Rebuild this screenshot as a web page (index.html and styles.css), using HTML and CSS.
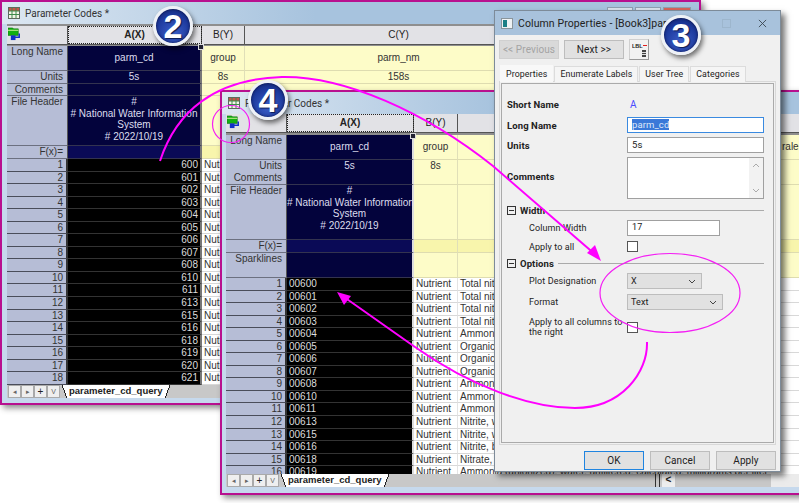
FILE: index.html
```html
<!DOCTYPE html>
<html>
  <head>
    <meta charset="UTF-8" />
    <link rel="stylesheet" href="styles.css">
  </head>
  <body>
    <svg class="defs" width="0" height="0">
      <symbol id="book-icon" viewBox="0 0 12 12">
        <rect x="0.5" y="0.5" width="11" height="11" fill="#f4f4e8" stroke="#5d6a5d" />
        <rect x="1" y="1" width="10" height="3" fill="#c8504a" />
        <path d="M4 1v10M8 1v10M1 4h10M1 7.5h10" stroke="#3f8a4a" fill="none" />
      </symbol>
      <symbol id="link-icon" viewBox="0 0 16 15">
        <path d="M0 1h5l1 1h5v7H0z" fill="#12b012" stroke="#0c6a0c" stroke-width="0.6" />
        <rect x="0" y="3" width="11" height="1" fill="#d8f4a0" />
        <path d="M12 7v4H7" fill="none" stroke="#1030c8" stroke-width="1.6" />
        <rect x="3" y="9" width="5" height="5" fill="#1030c8" />
      </symbol>
    </svg>

    <!-- back workbook -->
    <div class="window win-back">
      <div class="titlebar">
        <svg class="book-icon"><use href="#book-icon" /></svg>
        <span class="win-title">Parameter Codes *</span>
        <div class="win-btns">
          <span></span><span></span><span class="close"></span>
        </div>
      </div>
      <div class="sheet">
        <div class="row row-head">
          <div class="corner"><svg class="link-icon"><use href="#link-icon" /></svg></div>
          <div class="col-a col-sel">A(X)</div>
          <div class="col-b">B(Y)</div>
          <div class="col-c">C(Y)</div>
        </div>
        <div class="row row-long">
          <div class="label">Long Name</div>
          <div class="cell-a center">parm_cd<i class="handle"></i></div>
          <div class="cell-b center">group</div>
          <div class="cell-c center">parm_nm</div>
        </div>
        <div class="row row-units">
          <div class="label">Units</div>
          <div class="cell-a center">5s</div>
          <div class="cell-b center">8s</div>
          <div class="cell-c center">158s</div>
        </div>
        <div class="row row-comments">
          <div class="label">Comments</div>
          <div class="cell-a"></div>
          <div class="cell-b"></div>
          <div class="cell-c"></div>
        </div>
        <div class="row row-file">
          <div class="label">File Header</div>
          <div class="cell-a center">#<br># National Water Information<br>System<br># 2022/10/19</div>
          <div class="cell-b"></div>
          <div class="cell-c"></div>
        </div>
        <div class="row row-fx">
          <div class="label right">F(x)=</div>
          <div class="cell-a"></div>
          <div class="cell-b"></div>
          <div class="cell-c"></div>
        </div>
        <div class="rows">
          <div class="row data"><div class="num">1</div><div class="val right">600</div><div class="txt">Nutrient</div><div class="txt"></div></div>
          <div class="row data"><div class="num">2</div><div class="val right">601</div><div class="txt">Nutrient</div><div class="txt"></div></div>
          <div class="row data"><div class="num">3</div><div class="val right">602</div><div class="txt">Nutrient</div><div class="txt"></div></div>
          <div class="row data"><div class="num">4</div><div class="val right">603</div><div class="txt">Nutrient</div><div class="txt"></div></div>
          <div class="row data"><div class="num">5</div><div class="val right">604</div><div class="txt">Nutrient</div><div class="txt"></div></div>
          <div class="row data"><div class="num">6</div><div class="val right">605</div><div class="txt">Nutrient</div><div class="txt"></div></div>
          <div class="row data"><div class="num">7</div><div class="val right">606</div><div class="txt">Nutrient</div><div class="txt"></div></div>
          <div class="row data"><div class="num">8</div><div class="val right">607</div><div class="txt">Nutrient</div><div class="txt"></div></div>
          <div class="row data"><div class="num">9</div><div class="val right">608</div><div class="txt">Nutrient</div><div class="txt"></div></div>
          <div class="row data"><div class="num">10</div><div class="val right">610</div><div class="txt">Nutrient</div><div class="txt"></div></div>
          <div class="row data"><div class="num">11</div><div class="val right">611</div><div class="txt">Nutrient</div><div class="txt"></div></div>
          <div class="row data"><div class="num">12</div><div class="val right">613</div><div class="txt">Nutrient</div><div class="txt"></div></div>
          <div class="row data"><div class="num">13</div><div class="val right">615</div><div class="txt">Nutrient</div><div class="txt"></div></div>
          <div class="row data"><div class="num">14</div><div class="val right">616</div><div class="txt">Nutrient</div><div class="txt"></div></div>
          <div class="row data"><div class="num">15</div><div class="val right">618</div><div class="txt">Nutrient</div><div class="txt"></div></div>
          <div class="row data"><div class="num">16</div><div class="val right">619</div><div class="txt">Nutrient</div><div class="txt"></div></div>
          <div class="row data"><div class="num">17</div><div class="val right">620</div><div class="txt">Nutrient</div><div class="txt"></div></div>
          <div class="row data"><div class="num">18</div><div class="val right">621</div><div class="txt">Nutrient</div><div class="txt"></div></div>
        </div>
      </div>
      <div class="sheet-tabs">
        <div class="nav-btns">
          <span>&#9666;</span><span>&#9656;</span><span class="plus">+</span><span>V</span>
        </div>
        <div class="sheet-tab">parameter_cd_query</div>
      </div>
    </div>

    <!-- front workbook -->
    <div class="window win-front">
      <div class="titlebar">
        <svg class="book-icon"><use href="#book-icon" /></svg>
        <span class="win-title">Parameter Codes *</span>
      </div>
      <div class="sheet">
        <div class="row row-head">
          <div class="corner"><svg class="link-icon"><use href="#link-icon" /></svg></div>
          <div class="col-a col-sel">A(X)</div>
          <div class="col-b">B(Y)</div>
          <div class="col-c"></div>
        </div>
        <div class="row row-long">
          <div class="label">Long Name</div>
          <div class="cell-a center">parm_cd<i class="handle"></i></div>
          <div class="cell-b center">group</div>
          <div class="cell-c cell-cut">raler</div>
        </div>
        <div class="row row-units">
          <div class="label">Units</div>
          <div class="cell-a center">5s</div>
          <div class="cell-b center">8s</div>
          <div class="cell-c"></div>
        </div>
        <div class="row row-comments">
          <div class="label">Comments</div>
          <div class="cell-a"></div>
          <div class="cell-b"></div>
          <div class="cell-c"></div>
        </div>
        <div class="row row-file">
          <div class="label">File Header</div>
          <div class="cell-a center">#<br># National Water Information<br>System<br># 2022/10/19</div>
          <div class="cell-b"></div>
          <div class="cell-c"></div>
        </div>
        <div class="row row-fx">
          <div class="label right">F(x)=</div>
          <div class="cell-a"></div>
          <div class="cell-b"></div>
          <div class="cell-c"></div>
        </div>
        <div class="row row-spark">
          <div class="label">Sparklines</div>
          <div class="cell-a"></div>
          <div class="cell-b"></div>
          <div class="cell-c"></div>
        </div>
        <div class="rows">
          <div class="row data"><div class="num">1</div><div class="val">00600</div><div class="txt">Nutrient</div><div class="txt">Total nitrogen</div></div>
          <div class="row data"><div class="num">2</div><div class="val">00601</div><div class="txt">Nutrient</div><div class="txt">Total nitrogen</div></div>
          <div class="row data"><div class="num">3</div><div class="val">00602</div><div class="txt">Nutrient</div><div class="txt">Total nitrogen</div></div>
          <div class="row data"><div class="num">4</div><div class="val">00603</div><div class="txt">Nutrient</div><div class="txt">Total nitrogen</div></div>
          <div class="row data"><div class="num">5</div><div class="val">00604</div><div class="txt">Nutrient</div><div class="txt">Ammonia</div></div>
          <div class="row data"><div class="num">6</div><div class="val">00605</div><div class="txt">Nutrient</div><div class="txt">Organic nitrogen</div></div>
          <div class="row data"><div class="num">7</div><div class="val">00606</div><div class="txt">Nutrient</div><div class="txt">Organic nitrogen</div></div>
          <div class="row data"><div class="num">8</div><div class="val">00607</div><div class="txt">Nutrient</div><div class="txt">Organic nitrogen</div></div>
          <div class="row data"><div class="num">9</div><div class="val">00608</div><div class="txt">Nutrient</div><div class="txt">Ammonia</div></div>
          <div class="row data"><div class="num">10</div><div class="val">00610</div><div class="txt">Nutrient</div><div class="txt">Ammonia</div></div>
          <div class="row data"><div class="num">11</div><div class="val">00611</div><div class="txt">Nutrient</div><div class="txt">Ammonia</div></div>
          <div class="row data"><div class="num">12</div><div class="val">00613</div><div class="txt">Nutrient</div><div class="txt">Nitrite, water</div></div>
          <div class="row data"><div class="num">13</div><div class="val">00615</div><div class="txt">Nutrient</div><div class="txt">Nitrite, water</div></div>
          <div class="row data"><div class="num">14</div><div class="val">00616</div><div class="txt">Nutrient</div><div class="txt">Nitrite, bed</div></div>
          <div class="row data"><div class="num">15</div><div class="val">00618</div><div class="txt">Nutrient</div><div class="txt">Nitrate, water</div></div>
          <div class="row data"><div class="num">16</div><div class="val">00619</div><div class="txt">Nutrient</div><div class="txt">Ammonia (unionized), water, unfiltered, calculated, milligrams per liter</div></div>
        </div>
      </div>
      <div class="sheet-tabs">
        <div class="nav-btns">
          <span>&#9666;</span><span>&#9656;</span><span class="plus">+</span><span>V</span>
        </div>
        <div class="sheet-tab">parameter_cd_query</div>
        <div class="hscroll"><span>&lt;</span></div>
      </div>
    </div>

    <!-- column properties dialog -->
    <div class="dialog">
      <div class="dlg-title">
        <svg class="dlg-icon" viewBox="0 0 12 11">
          <rect x="0.5" y="0.5" width="11" height="10" fill="#eef2f4" stroke="#8a959c" />
          <rect x="2" y="2" width="4" height="7" fill="#1b7f86" />
        </svg>
        <span>Column Properties - [Book3]param</span>
        <i class="dlg-max"></i>
        <svg class="dlg-close" viewBox="0 0 10 10"><path d="M1 1l8 8M9 1l-8 8" stroke="#3a4650" fill="none" /></svg>
      </div>
      <div class="dlg-tools">
        <button class="btn disabled">&lt;&lt; Previous</button>
        <button class="btn">Next &gt;&gt;</button>
        <button class="btn-icon">
          <svg viewBox="0 0 16 16" width="16" height="16">
            <text x="0" y="6" class="lbl-text">LBL</text>
            <path d="M11 3.5h4" stroke="#e02020" fill="none" />
            <rect x="10" y="8" width="4" height="7" fill="#444" />
            <path d="M10 10.5h4M10 12.5h4" stroke="#ddd" fill="none" />
          </svg>
        </button>
      </div>
      <div class="dlg-tabs">
        <div class="dlg-tab active">Properties</div>
        <div class="dlg-tab">Enumerate Labels</div>
        <div class="dlg-tab">User Tree</div>
        <div class="dlg-tab">Categories</div>
      </div>
      <div class="panel">
        <div class="form-row top-row">
          <b>Short Name</b>
          <span class="short-name">A</span>
        </div>
        <div class="form-row">
          <b>Long Name</b>
          <div class="field focus"><mark>parm_cd</mark></div>
        </div>
        <div class="form-row">
          <b>Units</b>
          <div class="field">5s</div>
        </div>
        <div class="form-row comments-row">
          <b>Comments</b>
          <div class="field area">
            <div class="area-scroll">
              <svg viewBox="0 0 8 5"><path d="M1 4l3-3 3 3" stroke="#aaa" fill="none" /></svg>
              <svg viewBox="0 0 8 5"><path d="M1 1l3 3 3-3" stroke="#aaa" fill="none" /></svg>
            </div>
          </div>
        </div>
        <div class="group"><i class="minus"></i><b>Width</b><hr></div>
        <div class="form-row sub">
          <span>Column Width</span>
          <div class="field w-short">17</div>
        </div>
        <div class="form-row sub check-row">
          <span>Apply to all</span>
          <i class="check"></i>
        </div>
        <div class="group"><i class="minus"></i><b>Options</b><hr></div>
        <div class="form-row sub">
          <span>Plot Designation</span>
          <div class="select s-plot">X<svg viewBox="0 0 8 5"><path d="M1 1l3 3 3-3" stroke="#444" fill="none" /></svg></div>
        </div>
        <div class="form-row sub">
          <span>Format</span>
          <div class="select s-format">Text<svg viewBox="0 0 8 5"><path d="M1 1l3 3 3-3" stroke="#444" fill="none" /></svg></div>
        </div>
        <div class="form-row sub check-row">
          <span class="wrap">Apply to all columns to<br>the right</span>
          <i class="check"></i>
        </div>
      </div>
      <div class="dlg-foot">
        <button class="btn foot-btn default">OK</button>
        <button class="btn foot-btn">Cancel</button>
        <button class="btn foot-btn">Apply</button>
      </div>
    </div>

    <!-- pen annotations -->
    <svg class="pen" viewBox="0 0 799 503">
      <circle class="thin" cx="231" cy="124" r="18.5" />
      <ellipse class="thin" cx="670" cy="293" rx="70" ry="39.5" />
      <path class="thick" d="M160 161C176 112 214 79 282 77C345 76 425 112 493 166L597 256" />
      <path class="head" d="M601 261L587 253L595 245Z" />
      <path class="thick" d="M647 342C648 372 622 408 575 408C530 408 470 386 415 347L344 297" />
      <path class="head" d="M337 292L351 296L344 305Z" />
    </svg>

    <div class="badge badge-2">2</div>
    <div class="badge badge-3">3</div>
    <div class="badge badge-4">4</div>
  </body>
</html>
```

FILE: styles.css
```css
body {
  margin: 0;
  width: 799px;
  height: 503px;
  position: relative;
  overflow: hidden;
  background: white;
  font-family: "Liberation Sans", Arial, sans-serif;
  font-size: 10px;
  color: #222;
}
.defs {
  position: absolute;
}

/* workbook windows */
.window {
  position: absolute;
  box-sizing: border-box;
  border: 2px solid #b8108f;
  background: #c6d9ed;
  display: flex;
  flex-direction: column;
  box-shadow: 3px 3px 6px rgba(0, 0, 0, 0.45);
}
.win-back {
  left: 0;
  top: 0;
  width: 701px;
  height: 405px;
  --col-a: 134px;
  --col-b: 43px;
}
.win-front {
  left: 220px;
  top: 90px;
  width: 610px;
  height: 405px;
  --col-a: 127px;
  --col-b: 44px;
}
.titlebar {
  height: 22px;
  flex: none;
  display: flex;
  align-items: center;
  padding: 0 8px 0 6px;
  background: linear-gradient(to right, #dce7f2, #a7c3de 45%);
}
.book-icon {
  width: 12px;
  height: 12px;
  margin-right: 5px;
}
.win-title {
  font-family: "Roboto", sans-serif;
  font-size: 10px;
  color: #333;
}
.win-btns {
  margin-left: auto;
  display: flex;
  gap: 2px;
}
.win-btns span {
  width: 24px;
  height: 10px;
  border: 1px solid #8fa0b0;
  background: #dbe4ee;
}
.win-btns .close {
  width: 26px;
  background: #d9645c;
}

/* sheet grid */
.sheet {
  margin-left: 5px;
  padding-top: 2px;
  flex: 1;
  min-height: 0;
  display: flex;
  flex-direction: column;
  background: #8f8f8f;
  overflow: hidden;
}
.win-front .sheet {
  margin-left: 4px;
  padding-top: 0;
}
.row {
  display: grid;
  grid-template-columns: 61px var(--col-a) var(--col-b) 1fr;
  flex: none;
}
.row > div {
  box-sizing: border-box;
  overflow: hidden;
  white-space: nowrap;
}
.row-head {
  height: 18px;
  margin-bottom: 1px;
  line-height: 17px;
  text-align: center;
  background: #e2e2e6;
  border-bottom: 1px solid #555;
}
.win-front .row-head {
  margin-bottom: 2px;
}
.row-head > div {
  border-right: 1px solid #555;
}
.corner {
  text-align: left;
}
.link-icon {
  width: 15px;
  height: 14px;
  margin: 1px 0 0 1px;
}
.col-sel {
  font-weight: bold;
  outline: 1px dotted #222;
  outline-offset: -1px;
  background: #e2e2e6;
}
.row-long {
  height: 25px;
}
.row-units {
  height: 13px;
}
.row-comments {
  height: 12px;
}
.row-file {
  height: 50px;
}
.row-fx {
  height: 13px;
}
.row-spark {
  height: 25px;
}
.win-front .row-units {
  height: 12px;
}
.win-front .row-comments {
  height: 13px;
}
.win-front .row-file {
  height: 55px;
}
.label {
  background: #b6bdd6;
  color: #333;
  text-align: right;
  padding-right: 4px;
  border-bottom: 1px solid #6c7080;
  border-right: 1px solid #555;
  line-height: 12px;
}
.right {
  text-align: right;
}
.cell-a {
  background: #03033c;
  color: #dde;
  text-align: center;
  border-bottom: 1px solid #33334f;
  border-right: 2px solid #777;
  position: relative;
  overflow: visible !important;
}
.win-front .cell-a {
  border-right-color: #ddd;
}
.cell-b,
.cell-c {
  background: #fdfcc8;
  border-bottom: 1px solid #dedcb0;
  border-right: 1px solid #e0dfb8;
  color: #333;
}
.win-back .col-c,
.win-back .cell-c {
  padding-right: 146px;
}
.center {
  text-align: center;
  line-height: 12px;
}
.row-long .center {
  line-height: 24px;
}
.row-file .cell-a {
  line-height: 11.7px;
}
.row-fx .cell-a {
  background: #0a0a56;
}
.row-fx .cell-b,
.row-fx .cell-c {
  background: #f8f5ac;
}
.cell-cut {
  padding-left: 324px;
  line-height: 24px;
}
.handle {
  position: absolute;
  right: -4px;
  top: -2px;
  width: 4px;
  height: 4px;
  background: #223;
  border: 1px solid #ddd;
}

/* data rows */
.rows {
  flex: 1;
  min-height: 0;
  overflow: hidden;
  background: white;
}
.data {
  height: 12.55px;
  line-height: 12px;
}
.num {
  background: #b6bdd6;
  color: #333;
  text-align: right;
  padding-right: 3px;
  border-bottom: 1px solid #4a4d5a;
  border-right: 2px solid #333;
}
.val {
  background: black;
  color: #ddd;
  padding: 0 2px;
  border-bottom: 1px solid #333;
  border-right: 2px solid #777;
}
.win-front .val {
  border-right-color: #ddd;
}
.txt {
  background: white;
  color: #333;
  padding-left: 2px;
  border-bottom: 1px solid #d8d8d8;
  border-right: 1px solid #e4e4e4;
}

/* sheet tabs */
.sheet-tabs {
  height: 13px;
  flex: none;
  margin: 0 0 5px 5px;
  background: #c8c8c8;
  display: flex;
  align-items: stretch;
}
.win-front .sheet-tabs {
  margin: 0 0 6px 4px;
}
.nav-btns {
  display: flex;
  padding-left: 1px;
}
.nav-btns span {
  width: 13px;
  background: #efefef;
  border: 1px solid #aaa;
  box-sizing: border-box;
  font-size: 7px;
  line-height: 11px;
  text-align: center;
  color: #666;
}
.nav-btns .plus {
  font-size: 10px;
  color: #222;
}
.sheet-tab {
  position: relative;
  margin-left: 2px;
  padding: 0 8px 0 7px;
  background: white;
  font-weight: bold;
  font-size: 9.5px;
  line-height: 12px;
  color: #222;
}
.sheet-tab::before,
.sheet-tab::after {
  content: "";
  position: absolute;
  top: 0;
  bottom: 0;
  width: 5px;
}
.sheet-tab::before {
  left: 0;
  background: linear-gradient(to bottom left, white 46%, #222 46% 56%, #c8c8c8 56%);
}
.sheet-tab::after {
  right: 0;
  background: linear-gradient(to bottom right, white 46%, #222 46% 56%, #c8c8c8 56%);
}
.hscroll {
  margin-left: auto;
  width: 169px;
  box-sizing: border-box;
  display: flex;
  border-left: 1px solid #333;
  padding-left: 2px;
  background: linear-gradient(to right, #c8c8c8 111px, #ebebeb 111px);
  box-shadow: -3px 0 0 #c8c8c8, -4px 0 0 #333;
}
.hscroll span {
  width: 13px;
  background: #eee;
  text-align: center;
  font-weight: bold;
  line-height: 12px;
}

/* dialog */
.dialog {
  position: absolute;
  left: 494px;
  top: 10px;
  width: 287px;
  height: 462px;
  box-sizing: border-box;
  border: 1px solid #7d8b99;
  background: #f0f0f0;
  display: flex;
  flex-direction: column;
  font-family: "Roboto", sans-serif;
  font-size: 9.5px;
  letter-spacing: 0.1px;
  color: #222;
  box-shadow: 4px 4px 6px rgba(0, 0, 0, 0.55);
}
.dlg-title {
  height: 24px;
  flex: none;
  display: flex;
  align-items: center;
  padding: 0 13px 0 6px;
  background: #a8c2dc;
  font-size: 10.5px;
  color: #222;
}
.dlg-icon {
  width: 12px;
  height: 11px;
  margin-right: 5px;
}
.dlg-max {
  width: 7px;
  height: 7px;
  margin-left: auto;
  margin-right: 27px;
  border: 1px solid #9db6cd;
}
.dlg-close {
  width: 9px;
  height: 9px;
}
.dlg-tools {
  display: flex;
  align-items: center;
  gap: 5px;
  padding: 4px 0 0 4px;
  height: 21px;
  flex: none;
}
.btn {
  width: 60px;
  height: 19px;
  padding: 0;
  border: 1px solid #bdbdbd;
  background: #e1e1e1;
  font-family: "Roboto", sans-serif;
  font-size: 10px;
  letter-spacing: 0.1px;
  color: #222;
}
.btn.disabled {
  background: #d9d9d9;
  border-color: #d0d0d0;
  color: #a4a4a4;
}
.btn-icon {
  width: 20px;
  height: 21px;
  padding: 2px;
  border: 1px solid #d0d0d0;
  border-right-color: #999;
  border-bottom-color: #999;
  background: #f2f2f2;
}
.lbl-text {
  font-family: "Liberation Sans", sans-serif;
  font-size: 5.5px;
  font-weight: bold;
  fill: #222;
}
.dlg-tabs {
  display: flex;
  flex: none;
  margin: 6px 0 -1px 5px;
  height: 16px;
  position: relative;
  z-index: 1;
  font-size: 8.8px;
}
.dlg-tab {
  padding: 0 5px;
  line-height: 15px;
  background: #f5f5f5;
  border: 1px solid #dcdcdc;
  border-bottom: none;
  margin-right: 1px;
}
.dlg-tab.active {
  background: #f8f8f8;
  border-color: #f8f8f8;
  padding: 1px 5px 0;
  margin-top: -1px;
}
.panel {
  margin: 0 4px;
  height: 364px;
  flex: none;
  box-sizing: border-box;
  border: 1px solid #d8d8d8;
  outline: 1px solid #aaa;
  outline-offset: -3px;
  padding: 15px 11px 0 7px;
  background: #f0f0f0;
}
.form-row {
  display: grid;
  grid-template-columns: 120px 1fr;
  align-items: center;
  height: 16px;
  margin-bottom: 4px;
}
.form-row b {
  font-weight: bold;
}
.top-row {
  height: 14px;
  margin-bottom: 6px;
}
.short-name {
  color: #4a4aff;
  padding-left: 3px;
  font-size: 10px;
}
.field {
  box-sizing: border-box;
  height: 16px;
  padding-left: 4px;
  line-height: 13px;
  background: white;
  border: 1px solid #a0a0a0;
}
.field.focus {
  border-color: #3a8ae0;
}
mark {
  background: #3a78d8;
  color: #dfe8f8;
}
.comments-row {
  height: 42px;
  margin-bottom: 5px;
  align-items: start;
}
.comments-row b {
  margin-top: 14px;
}
.area {
  height: 42px;
  padding: 0;
  position: relative;
}
.area-scroll {
  position: absolute;
  right: 0;
  top: 0;
  bottom: 0;
  width: 14px;
  background: #f2f2f2;
  display: flex;
  flex-direction: column;
  justify-content: space-between;
  align-items: center;
  padding: 5px 0;
  box-sizing: border-box;
}
.area-scroll svg {
  width: 8px;
  height: 5px;
}
.group {
  display: flex;
  align-items: center;
  height: 13px;
  margin-bottom: 3px;
  gap: 4px;
}
.group hr {
  flex: 1;
  height: 0;
  margin: 0;
  border: none;
  border-top: 1px solid #aaa;
}
.minus {
  width: 7px;
  height: 7px;
  border: 1px solid #333;
  position: relative;
}
.minus::after {
  content: "";
  position: absolute;
  left: 1px;
  right: 1px;
  top: 3px;
  height: 1px;
  background: #333;
}
.sub {
  padding-left: 22px;
  grid-template-columns: 98px 1fr;
  margin-bottom: 5px;
  font-size: 9px;
}
.wrap {
  line-height: 10px;
  white-space: nowrap;
}
.w-short {
  width: 93px;
}
.check-row {
  height: 11px;
  margin-bottom: 5px;
}
.check-row:last-child {
  margin-top: 7px;
}
.check {
  width: 9px;
  height: 9px;
  border: 1px solid #555;
  background: white;
  display: block;
}
.select {
  box-sizing: border-box;
  height: 16px;
  padding: 0 5px 0 3px;
  line-height: 14px;
  background: #e1e1e1;
  border: 1px solid #bdbdbd;
  display: flex;
  align-items: center;
  justify-content: space-between;
}
.select svg {
  width: 8px;
  height: 5px;
}
.s-plot {
  width: 75px;
}
.s-format {
  width: 96px;
}
.dlg-foot {
  display: flex;
  justify-content: flex-end;
  gap: 6px;
  padding: 6px 4px 0 0;
}
.foot-btn {
  height: 19px;
}
.foot-btn.default {
  border: 1px solid #1f84e0;
}

/* annotations */
.pen {
  position: absolute;
  left: 0;
  top: 0;
  width: 799px;
  height: 503px;
}
.pen .thin {
  fill: none;
  stroke: #f41ef4;
  stroke-width: 1.2;
}
.pen .thick {
  fill: none;
  stroke: #ff00ff;
  stroke-width: 2;
}
.pen .head {
  fill: #ff00ff;
}
.badge {
  position: absolute;
  width: 40px;
  height: 40px;
  box-sizing: border-box;
  border-radius: 50%;
  border: 3px solid #eef1f6;
  background: radial-gradient(circle at 50% 70%, #3b5fc9 0%, #1d399c 60%, #12246e 100%);
  box-shadow: 2px 3px 5px rgba(0, 0, 0, 0.55), inset 0 0 3px rgba(0, 0, 40, 0.8);
  display: flex;
  align-items: center;
  justify-content: center;
  font-size: 34px;
  font-weight: bold;
  color: white;
  text-shadow: 1px 1px 1px #0c1a50;
  overflow: hidden;
}
.badge-2 {
  left: 153px;
  top: 6px;
}
.badge-3 {
  left: 661px;
  top: 15px;
}
.badge-4 {
  left: 248px;
  top: 80px;
}
```
